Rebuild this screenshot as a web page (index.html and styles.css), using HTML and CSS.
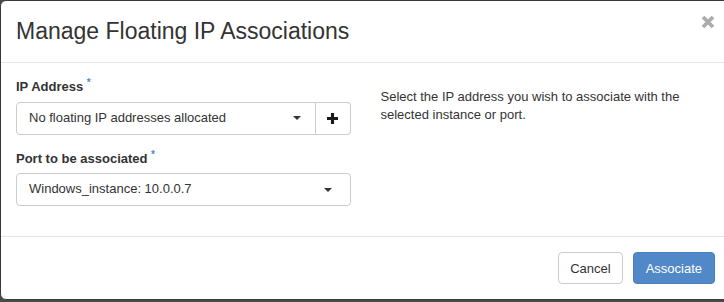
FILE: index.html
```html
<!DOCTYPE html>
<html>
<head>
<meta charset="utf-8">
<link rel="stylesheet" href="styles.css">
</head>
<body>
<div class="backdrop">
  <div class="modal">
    <div class="modal-header">
      <h3 class="modal-title">Manage Floating IP Associations</h3>
      <span class="close" aria-label="Close">
        <svg width="14" height="14" viewBox="0 0 14 14"><path d="M2 2 L12 12 M12 2 L2 12" stroke="#acacac" stroke-width="3.8" stroke-linecap="butt"/></svg>
      </span>
    </div>
    <div class="modal-body">
      <div class="col col-left">
        <div class="form-group">
          <label class="control-label">IP Address <span class="req">*</span></label>
          <div class="input-group">
            <div class="select grow">
              <span class="select-text">No floating IP addresses allocated</span>
              <span class="caret"></span>
            </div>
            <div class="addon">
              <svg width="11" height="11" viewBox="0 0 12 12"><path d="M4.3 0h3.4v4.3H12v3.4H7.7V12H4.3V7.7H0V4.3h4.3z" fill="#1a1a1a"/></svg>
            </div>
          </div>
        </div>
        <div class="form-group">
          <label class="control-label">Port to be associated <span class="req">*</span></label>
          <div class="select">
            <span class="select-text">Windows_instance: 10.0.0.7</span>
            <span class="caret"></span>
          </div>
        </div>
      </div>
      <div class="col col-right">
        <p class="help">Select the IP address you wish to associate with the selected instance or port.</p>
      </div>
    </div>
    <div class="modal-footer">
      <button class="btn btn-default">Cancel</button>
      <button class="btn btn-primary">Associate</button>
    </div>
  </div>
</div>
</body>
</html>
```

FILE: styles.css
```css
* { box-sizing: border-box; }
html, body {
  margin: 0;
  padding: 0;
  width: 724px;
  height: 302px;
  overflow: hidden;
  background: #4a4a4a;
  font-family: "Liberation Sans", Arial, sans-serif;
  font-size: 13px;
  line-height: 1.42857;
  color: #333;
}
.backdrop {
  width: 760px;
}
.modal {
  width: 731px;
  background: #fff;
  border: 1px solid #3a3a3a;
  border-radius: 6px;
  display: flex;
  flex-direction: column;
}
.modal-header {
  position: relative;
  padding: 15px 15px;
  border-bottom: 1px solid #e5e5e5;
}
.modal-title {
  margin: 0;
  font-size: 23px;
  font-weight: normal;
  line-height: 31px;
  color: #333;
}
.close {
  position: absolute;
  top: 14px;
  right: 15px;
  width: 14px;
  height: 14px;
  display: block;
}
.close svg { display: block; }
.modal-body {
  display: flex;
  padding: 15px 0;
  border-bottom: 1px solid #e5e5e5;
}
.col {
  width: 365px;
  padding: 0 15px;
}
.form-group { margin-bottom: 15px; }
.control-label {
  display: block;
  font-weight: bold;
  margin-bottom: 5px;
}
.req {
  color: #4a8ad0;
  font-size: 10px;
  line-height: 0;
  position: relative;
  top: -5px;
}
.input-group { display: flex; }
.select {
  height: 33px;
  border: 1px solid #ccc;
  border-radius: 4px;
  padding: 0 18px 0 12px;
  display: flex;
  align-items: center;
  justify-content: space-between;
  background: #fff;
}
.select.grow {
  flex: 1;
  border-radius: 4px 0 0 4px;
  padding-right: 14px;
}
.caret {
  width: 0;
  height: 0;
  border-left: 4.5px solid transparent;
  border-right: 4.5px solid transparent;
  border-top: 4.5px solid #333;
}
.addon {
  width: 35px;
  height: 33px;
  border: 1px solid #ccc;
  border-left: none;
  border-radius: 0 4px 4px 0;
  display: flex;
  align-items: center;
  justify-content: center;
}
.addon svg { display: block; }
.help {
  margin: 10px 0 0;
  line-height: 18px;
  color: #333;
}
.modal-footer {
  padding: 15px;
  display: flex;
  justify-content: flex-end;
  gap: 10px;
}
.btn {
  font-family: inherit;
  font-size: 13px;
  height: 32px;
  padding: 0 11px;
  border-radius: 4px;
  border: 1px solid #ccc;
  background: #fff;
  color: #333;
}
.btn-primary {
  padding: 0 12px;
  background: #5088c8;
  border-color: #4a7fbd;
  color: #fff;
}
```
